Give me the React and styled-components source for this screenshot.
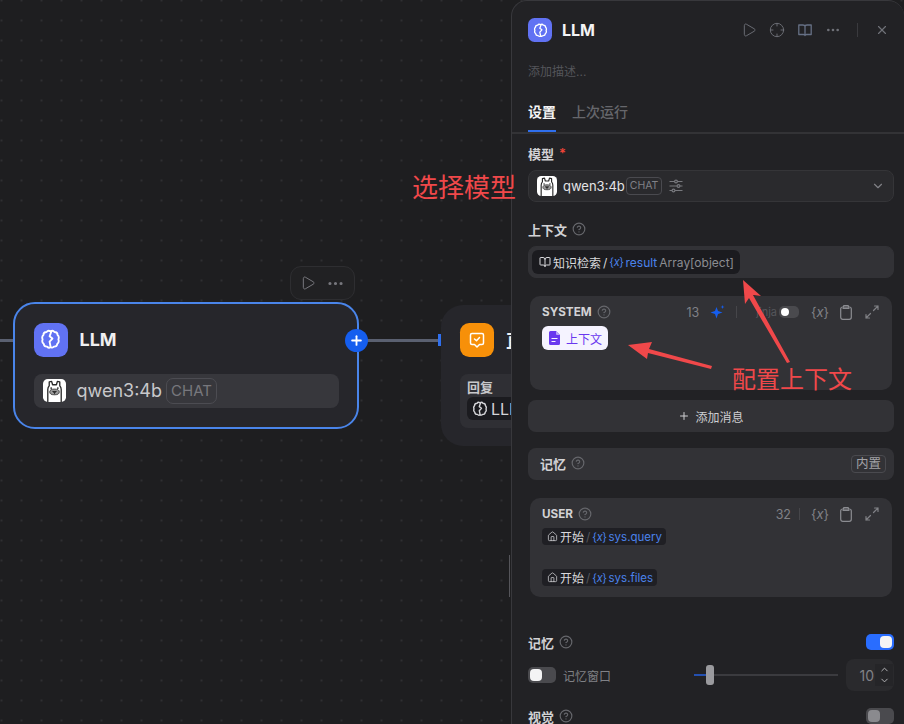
import styled, { createGlobalStyle } from "styled-components";
import { Play, Crosshair, Ellipsis, X, ChevronDown, ChevronUp, CircleHelp, Plus, House, BookOpen } from "lucide-react";

const GlobalStyle = createGlobalStyle`
  html, body { margin: 0; padding: 0; background: #1e1e20; }
  body { font-family: Inter, "Noto Sans CJK SC", sans-serif; overflow: hidden; }
`;

const Canvas = styled.div`
  position: relative;
  width: 904px;
  height: 724px;
  overflow: hidden;
  background-color: #1e1e20;
  background-image: radial-gradient(circle, #2f2f31 1px, transparent 1.4px);
  background-size: 20px 20px;
  background-position: 11.5px 10.5px;
`;

/* workflow nodes, free placement on the canvas */
const Node = styled.div`
  position: absolute;
  left: ${(p) => p.$x}px;
  top: ${(p) => p.$y}px;
  width: ${(p) => p.$w}px;
  height: ${(p) => p.$h}px;
  box-sizing: border-box;
  padding: ${(p) => (p.$selected ? "18.5px 18.5px" : "18px 0 18px 19px")};
  border-radius: ${(p) => (p.$selected ? "22px" : "22px 0 0 22px")};
  background: #26262b;
  border: ${(p) => (p.$selected ? "2.5px solid #4a85ea" : "none")};
  display: flex;
  flex-direction: column;
  gap: 17px;
  overflow: hidden;
`;

const NodeHead = styled.div`
  display: flex;
  align-items: center;
  gap: 12px;
  color: #f0f0f1;
  font-size: 18px;
  font-weight: 700;
  white-space: nowrap;
`;

const NodeTitle = styled.span`
  min-width: 0;
  overflow: hidden;
`;

const IconTile = styled.div`
  flex: none;
  width: ${(p) => p.$size}px;
  height: ${(p) => p.$size}px;
  border-radius: ${(p) => p.$size * 0.27}px;
  background: ${(p) => p.$bg};
  display: flex;
  align-items: center;
  justify-content: center;
`;

const NodeModel = styled.div`
  height: 34px;
  border-radius: 8px;
  background: #37373c;
  display: flex;
  align-items: center;
  padding-left: 9px;
  color: #c8c8cb;
  font-size: 18px;
  gap: 11px;
`;

const NodeBadge = styled.span`
  width: 51px;
  height: 26px;
  box-sizing: border-box;
  border: 1px solid #4c4c52;
  border-radius: 7px;
  color: #77777d;
  font-size: 15px;
  display: flex;
  align-items: center;
  justify-content: center;
  margin-left: -7px;
`;

const ReplyBox = styled.div`
  height: 55px;
  border-radius: 8px 0 0 8px;
  background: #2f2f34;
  padding: 3px 0 3px 7px;
  box-sizing: border-box;
  color: #c8c8cb;
  font-size: 13px;
  font-weight: 600;
  line-height: 20px;
  overflow: hidden;
`;

const ReplyChip = styled.div`
  display: flex;
  align-items: center;
  gap: 3px;
  height: 23px;
  padding-left: 5px;
  border-radius: 6px 0 0 6px;
  background: #1b1b1f;
  color: #d5d5d8;
  font-size: 16px;
  font-weight: 400;
  white-space: nowrap;
  overflow: hidden;

  svg {
    flex: none;
  }
`;

const NodeToolbar = styled.div`
  position: absolute;
  left: 290px;
  top: 266px;
  width: 65px;
  height: 34px;
  box-sizing: border-box;
  border: 1px solid #2e2e31;
  border-radius: 11px;
  background: #212123;
  display: flex;
  align-items: center;
  justify-content: center;
  gap: 10px;
  color: #77777d;
`;

const Wire = styled.div`
  position: absolute;
  top: 339px;
  left: ${(p) => p.$x}px;
  width: ${(p) => p.$w}px;
  height: 3px;
  background: #5a6070;
`;

const TargetPin = styled.div`
  position: absolute;
  left: 438px;
  top: 334px;
  width: 3px;
  height: 12px;
  background: #2f6fed;
`;

const AddHandle = styled.div`
  position: absolute;
  left: 345px;
  top: 329px;
  width: 23px;
  height: 23px;
  border-radius: 50%;
  background: #155eef;
  color: #fff;
  display: flex;
  align-items: center;
  justify-content: center;
`;

/* settings panel */
const Panel = styled.aside`
  position: absolute;
  left: 511px;
  top: 0;
  width: 393px;
  height: 724px;
  box-sizing: border-box;
  overflow: hidden;
  background: #222225;
  border: 1.5px solid #38383c;
  border-bottom: none;
  border-right: none;
  border-radius: 16px 16px 0 0;
`;

const PanelHead = styled.div`
  display: flex;
  align-items: center;
  height: 24px;
  margin-top: 17px;
  padding: 0 15px 0 16px;
`;

const PanelTitle = styled.div`
  margin-left: 10px;
  flex: 1;
  color: #f4f4f5;
  font-size: 16px;
  font-weight: 700;
`;

const HeadActions = styled.div`
  display: flex;
  align-items: center;
  gap: 12px;
  color: #6f7178;
`;

const HeadDivider = styled.span`
  width: 1px;
  height: 14px;
  margin: 0 5px 0 4px;
  background: #3a3a3e;
`;

const Description = styled.div`
  margin: 21px 0 0 16px;
  color: #54555a;
  font-size: 12px;
  line-height: 18px;
`;

const Tabs = styled.div`
  display: flex;
  gap: 16px;
  height: 32px;
  margin-top: 19px;
  padding: 0 16px;
  border-bottom: 2px solid #333336;
`;

const Tab = styled.div`
  height: 32px;
  box-sizing: border-box;
  font-size: 14px;
  font-weight: ${(p) => (p.$active ? 600 : 500)};
  line-height: 24px;
  color: ${(p) => (p.$active ? "#f4f4f5" : "#66676c")};
  border-bottom: 2px solid ${(p) => (p.$active ? "#2f6fed" : "transparent")};
`;

const Body = styled.div`
  padding: 10px 10px 0 16px;
`;

const Label = styled.div`
  display: flex;
  align-items: center;
  gap: 5px;
  height: 18px;
  color: #d2d2d5;
  font-size: 13px;
  font-weight: 600;
  margin-top: ${(p) => p.$mt || 0}px;
`;

const Required = styled.span`
  color: #f04438;
`;

const Help = styled(CircleHelp)`
  color: #66676c;
  flex: none;
`;

const Field = styled.div`
  height: 32px;
  margin-top: ${(p) => p.$mt || 0}px;
  box-sizing: border-box;
  border-radius: 8px;
  background: ${(p) => (p.$soft ? "#323236" : "#2a2a2d")};
  border: 1px solid ${(p) => (p.$soft ? "#323236" : "#353538")};
  display: flex;
  align-items: center;
`;

const ModelName = styled.span`
  margin-left: 6px;
  color: #e4e4e6;
  font-size: 13px;
`;

const Badge = styled.span`
  height: 18px;
  box-sizing: border-box;
  padding: 0 ${(p) => (p.$big ? 4 : 3)}px;
  margin-left: 1px;
  border: 1px solid #4a4a4f;
  border-radius: 4px;
  color: ${(p) => (p.$big ? "#a2a2a6" : "#808186")};
  font-size: ${(p) => (p.$big ? 12.5 : 10.5)}px;
  line-height: 16px;
`;

const Push = styled.span`
  flex: 1;
`;

const ContextChip = styled.div`
  display: flex;
  align-items: center;
  height: 24px;
  margin-left: 3px;
  padding: 0 6px 0 7px;
  gap: 2px;
  border-radius: 6px;
  background: #1b1b1f;
  color: #d9d9dc;
  font-size: 12px;
  white-space: nowrap;
`;

const VarText = styled.span`
  color: #4b83ec;
`;

const MutedText = styled.span`
  color: #8b8c91;
`;

const Slash = styled.span`
  color: ${(p) => p.$color || "#d9d9dc"};
`;

const VarMark = styled.span`
  color: #4b83ec;
  font-size: 11px;
  letter-spacing: -0.4px;
`;

const Prompt = styled.div`
  margin: ${(p) => p.$mt}px 2px 0;
  height: ${(p) => p.$h}px;
  box-sizing: border-box;
  padding: 8px 12px;
  border-radius: 10px;
  background: #323236;
`;

const PromptHead = styled.div`
  display: flex;
  align-items: center;
  height: 16px;
  color: #d2d2d5;
  font-size: 11.7px;
  font-weight: 700;
  gap: 5px;
`;

const PromptTools = styled.div`
  margin-left: auto;
  display: flex;
  align-items: center;
  color: #808186;
  font-size: 12.5px;
  font-weight: 400;
  padding-right: 1px;
`;

const ToolSlot = styled.span`
  flex: none;
  display: flex;
  align-items: center;
  justify-content: center;
  width: ${(p) => p.$w}px;
  margin-left: ${(p) => p.$ml || 0}px;
  color: ${(p) => p.$color || "inherit"};
  font-size: 13px;
`;

const ToolDivider = styled.span`
  width: 1px;
  height: 12px;
  background: #46464a;
  margin: 0 ${(p) => p.$r}px 0 ${(p) => p.$l}px;
`;

const Jinja = styled.span`
  color: #55565b;
  font-size: 11px;
  margin-right: 2px;
`;

const ContextTag = styled.div`
  display: inline-flex;
  align-items: center;
  gap: 5px;
  height: 24px;
  margin-top: 6px;
  padding: 0 6px;
  border-radius: 6px;
  background: #f5f3ff;
  color: #6938ef;
  font-size: 12px;
`;

const VarChip = styled.div`
  display: flex;
  align-items: center;
  width: fit-content;
  height: 17px;
  margin-top: ${(p) => p.$mt}px;
  padding: 0 4px 0 5px;
  gap: 2px;
  border-radius: 4px;
  background: #1f1f24;
  color: #d9d9dc;
  font-size: 12px;
`;

const VarName = styled(VarText)`
  font-size: 11.5px;
`;

const AddMessage = styled.div`
  height: 32px;
  margin-top: 10px;
  border-radius: 8px;
  background: #323236;
  display: flex;
  align-items: center;
  justify-content: center;
  gap: 5px;
  color: #cfcfd2;
  font-size: 12px;
`;

const MemoryBar = styled.div`
  height: 32px;
  margin-top: 16px;
  padding: 0 8px 0 12px;
  border-radius: 8px;
  background: #323236;
  display: flex;
  align-items: center;
  justify-content: space-between;
`;

const MemoryLabel = styled(Label)`
  padding-bottom: 2px;
`;

const SwitchRow = styled.div`
  display: flex;
  align-items: center;
  justify-content: space-between;
  height: 18px;
  margin-top: ${(p) => p.$mt}px;
`;

const Switch = styled.span`
  flex: none;
  box-sizing: border-box;
  width: ${(p) => p.$w || 28}px;
  height: ${(p) => p.$h || 16}px;
  padding: 2px;
  border-radius: 5px;
  display: flex;
  background: ${(p) => (p.$on ? "#296dff" : "#4a4a4e")};
  justify-content: ${(p) => (p.$on ? "flex-end" : "flex-start")};
  &::after {
    content: "";
    width: ${(p) => (p.$h || 16) - 4}px;
    height: ${(p) => (p.$h || 16) - 4}px;
    border-radius: 4px;
    background: ${(p) => p.$knob || "#f4f4f5"};
  }
`;

const WindowRow = styled.div`
  display: flex;
  align-items: center;
  height: 32px;
  margin-top: 8px;
  color: #808186;
  font-size: 12px;
`;

const WindowLabel = styled.span`
  margin-left: 7px;
  width: 131px;
`;

const Slider = styled.div`
  position: relative;
  width: 144px;
  height: 2px;
  background: #3b3b3f;
`;

const SliderFill = styled.div`
  height: 2px;
  width: 12px;
  background: #2450b0;
`;

const SliderThumb = styled.div`
  position: absolute;
  left: 12px;
  top: -9px;
  width: 8px;
  height: 20px;
  border-radius: 3px;
  background: #9a9a9e;
`;

const Stepper = styled.div`
  width: 48px;
  height: 32px;
  margin-left: auto;
  box-sizing: border-box;
  border-radius: 8px;
  background: #2a2a2d;
  display: flex;
  align-items: center;
  justify-content: flex-end;
  padding-right: 1px;
  gap: 1px;
  color: #808186;
  font-size: 14px;
`;

const StepperArrows = styled.span`
  display: flex;
  flex-direction: column;
  width: 18px;
  align-items: center;
  background: #252528;
  color: #bdbdc1;
`;

const ResizeGrip = styled.div`
  position: absolute;
  left: 509px;
  top: 555px;
  width: 1px;
  height: 42px;
  background: #55555a;
`;

/* red annotations drawn over the screenshot */
const Note = styled.div`
  position: absolute;
  left: ${(p) => p.$x}px;
  top: ${(p) => p.$y}px;
  color: #f0484a;
  font-size: ${(p) => p.$size}px;
  line-height: 30px;
  white-space: nowrap;
`;

const ArrowLayer = styled.svg`
  position: absolute;
  left: 0;
  top: 0;
  pointer-events: none;
`;

function BrainIcon({ size = 16, color = "#fff" }) {
  return (
    <svg width={size} height={size} viewBox="0 0 16 16" fill="none" stroke={color} strokeWidth="1.4" strokeLinecap="round" strokeLinejoin="round">
      <path d="M8 1.8c1-.6 2.400-.4 3 .5 1.300 0 2.400 1 2.400 2.300.8.7 1.100 2.200.6 3.400.5 1.200.1 2.600-.8 3.300-.2 1.300-1.300 2.200-2.600 2.100-.7.8-2 1-2.600.4-.7.6-1.900.4-2.600-.4-1.300.1-2.400-.8-2.600-2.100-.9-.7-1.300-2.100-.8-3.300-.5-1.200-.2-2.700.6-3.400 0-1.300 1.100-2.300 2.400-2.300.6-.9 2-1.100 3-.5Z" />
      <path d="M8.600 2 7.300 5.600l2.200 1.700-2.200 2.400.8 4" />
    </svg>
  );
}

function AnswerIcon() {
  return (
    <svg width="20" height="20" viewBox="0 0 20 20" fill="none" stroke="#fff" strokeWidth="1.5" strokeLinecap="round" strokeLinejoin="round">
      <path d="M5 3.5h10a1.5 1.5 0 0 1 1.5 1.5v8a1.5 1.5 0 0 1-1.5 1.5h-2.5L10 17l-2.5-2.5H5A1.5 1.5 0 0 1 3.5 13V5A1.5 1.5 0 0 1 5 3.5Z" />
      <path d="m7.5 9 2 1.8 3-3.2" />
    </svg>
  );
}

function LlamaAvatar({ size }) {
  return (
    <svg width={size} height={size} viewBox="0 0 24 24">
      <rect width="24" height="24" rx="5" fill="#fff" />
      <path d="M5 24V11c0-2 .7-3.200 1.500-4V3l2.500-.5L10 6h4l1-3.500 2.500.5v4c.8.800 1.500 2 1.500 4v13" fill="#fff" stroke="#2a2a2a" strokeWidth="1.400" strokeLinejoin="round" />
      <ellipse cx="12" cy="13.500" rx="5" ry="3" fill="#9a9a9a" stroke="#2a2a2a" strokeWidth=".8" />
      <path d="M10 13h4l-2 1.500ZM12 14.500V16" stroke="#222" strokeWidth=".8" fill="#222" />
      <circle cx="8.500" cy="9.500" r=".9" fill="#222" />
      <circle cx="15.500" cy="9.500" r=".9" fill="#222" />
    </svg>
  );
}

function ParamsIcon() {
  return (
    <svg width="16" height="16" viewBox="0 0 16 16" fill="none" stroke="#77787d" strokeWidth="1.200">
      <path d="M1.500 3.500h5M9.500 3.500h5M1.500 8h7.500M12 8h2.500M1.500 12.500h2.500M7 12.500h7.500" />
      <circle cx="8" cy="3.500" r="1.400" />
      <circle cx="10.500" cy="8" r="1.400" />
      <circle cx="5.500" cy="12.500" r="1.400" />
    </svg>
  );
}

function BookColumns() {
  return (
    <svg width="16" height="16" viewBox="0 0 16 16" fill="none" stroke="#667085" strokeWidth="1.300" strokeLinejoin="round">
      <path d="M8 4.500v9M8 4.500C8 3.500 7 3 6 3H1.800v9.500h4.700c.8 0 1.500.4 1.500 1 0-.6.7-1 1.500-1h4.700V3H10c-1 0-2 .5-2 1.500Z" />
    </svg>
  );
}

function Sparkle() {
  return (
    <svg width="15" height="15" viewBox="0 0 15 15" fill="#155eef">
      <path d="M6.500 2 8 6l4.500 1.500L8 9l-1.500 4.500L5 9 .5 7.500 5 6Z" />
      <path d="m12.500 0 .5 1.500 1.500.5-1.500.5-.5 1.500-.5-1.500-1.500-.5 1.500-.5Z" />
    </svg>
  );
}

function ClipboardIcon() {
  return (
    <svg width="12" height="15" viewBox="0 0 12 15" fill="none" stroke="#8b8c91" strokeWidth="1.200" strokeLinecap="round" strokeLinejoin="round">
      <rect x=".7" y="2" width="10.600" height="12.300" rx="2" />
      <path d="M3.500 2v-.5a1 1 0 0 1 1-1h3a1 1 0 0 1 1 1V2M3 3.300h6" />
    </svg>
  );
}

function ExpandIcon() {
  return (
    <svg width="14" height="14" viewBox="0 0 14 14" fill="none" stroke="#808186" strokeWidth="1.200" strokeLinecap="round" strokeLinejoin="round">
      <path d="M8.500 5.500 13 1M9.500 1H13v3.500M5.500 8.500 1 13M1 9.500V13h3.500" />
    </svg>
  );
}

function DocIcon() {
  return (
    <svg width="13" height="14" viewBox="0 0 13 14">
      <path d="M2.500 0H8l4 4v8.500A1.500 1.500 0 0 1 10.500 14h-8A1.500 1.500 0 0 1 1 12.500v-11A1.500 1.500 0 0 1 2.500 0Z" fill="#6938ef" />
      <path d="M8 0v3a1 1 0 0 0 1 1h3" fill="#b9a6f8" />
      <path d="M3.500 7.500h6M3.500 10.500h4" stroke="#f5f3ff" strokeWidth="1.200" />
    </svg>
  );
}

const XBraces = () => <>{"{"}<i>x</i>{"}"}</>;

function VarRef({ name, mt }) {
  return (
    <VarChip $mt={mt}>
      <House size={11} strokeWidth={1.6} />
      开始
      <Slash $color="#55565b">/</Slash>
      <VarMark><XBraces /></VarMark>
      <VarName>{name}</VarName>
    </VarChip>
  );
}

function PromptActions() {
  return (
    <>
      <ToolSlot $w={16}><XBraces /></ToolSlot>
      <ToolSlot $w={12} $ml={12}><ClipboardIcon /></ToolSlot>
      <ToolSlot $w={14} $ml={13}><ExpandIcon /></ToolSlot>
    </>
  );
}

function App() {
  return (
    <Canvas>
      <GlobalStyle />

      <Wire $x={0} $w={14} />
      <Wire $x={366} $w={74} />
      <NodeToolbar>
        <Play size={16} strokeWidth={1.5} />
        <Ellipsis size={19} />
      </NodeToolbar>

      <Node $x={13} $y={302} $w={346} $h={127} $selected>
        <NodeHead>
          <IconTile $size={34} $bg="#6172f3"><BrainIcon size={21} /></IconTile>
          LLM
        </NodeHead>
        <NodeModel>
          <LlamaAvatar size={23} />
          qwen3:4b
          <NodeBadge>CHAT</NodeBadge>
        </NodeModel>
      </Node>
      <AddHandle><Plus size={15} strokeWidth={3} /></AddHandle>

      <Node $x={441} $y={305} $w={71} $h={141}>
        <NodeHead>
          <IconTile $size={34} $bg="#f79009"><AnswerIcon /></IconTile>
          <NodeTitle>直接回复</NodeTitle>
        </NodeHead>
        <ReplyBox>
          回复
          <ReplyChip><BrainIcon size={16} color="#d5d5d8" />LLM</ReplyChip>
        </ReplyBox>
      </Node>
      <TargetPin />

      <Panel>
        <PanelHead>
          <IconTile $size={24} $bg="#6172f3"><BrainIcon size={15} /></IconTile>
          <PanelTitle>LLM</PanelTitle>
          <HeadActions>
            <Play size={16} strokeWidth={1.4} />
            <Crosshair size={16} strokeWidth={1.4} />
            <BookColumns />
            <Ellipsis size={16} />
            <HeadDivider />
            <X size={14} />
          </HeadActions>
        </PanelHead>
        <Description>添加描述...</Description>
        <Tabs>
          <Tab $active>设置</Tab>
          <Tab>上次运行</Tab>
        </Tabs>
        <Body>
          <Label>模型 <Required>*</Required></Label>
          <Field $mt={8}>
            <span style={{ width: 8 }} />
            <LlamaAvatar size={20} />
            <ModelName>qwen3:4b</ModelName>
            <Badge>CHAT</Badge>
            <span style={{ width: 6 }} />
            <ParamsIcon />
            <Push />
            <ChevronDown size={14} color="#808186" style={{ marginRight: 8 }} />
          </Field>

          <Label $mt={18}>上下文 <Help size={14} /></Label>
          <Field $mt={8} $soft>
            <ContextChip>
              <BookOpen size={12} />
              知识检索 <Slash>/</Slash>
              <VarMark><XBraces /></VarMark>
              <VarText>result</VarText>
              <MutedText>Array[object]</MutedText>
            </ContextChip>
          </Field>

          <Prompt $mt={18} $h={94}>
            <PromptHead>
              SYSTEM <Help size={14} />
              <PromptTools>
                13
                <ToolSlot $w={15} $ml={11} $color="#155eef"><Sparkle /></ToolSlot>
                <ToolDivider $l={11} $r={19} />
                <Jinja>jinja</Jinja>
                <Switch $w={20} $h={12} $knob="#fff" />
                <span style={{ width: 13 }} />
                <PromptActions />
              </PromptTools>
            </PromptHead>
            <ContextTag><DocIcon />上下文</ContextTag>
          </Prompt>

          <AddMessage><Plus size={12} />添加消息</AddMessage>

          <MemoryBar>
            <MemoryLabel>记忆 <Help size={14} /></MemoryLabel>
            <Badge $big>内置</Badge>
          </MemoryBar>

          <Prompt $mt={18} $h={99}>
            <PromptHead>
              USER <Help size={14} />
              <PromptTools>
                32
                <ToolDivider $l={8} $r={12} />
                <PromptActions />
              </PromptTools>
            </PromptHead>
            <VarRef name="sys.query" mt={6} />
            <VarRef name="sys.files" mt={24} />
          </Prompt>

          <SwitchRow $mt={36}>
            <Label>记忆 <Help size={14} /></Label>
            <Switch $on $knob="#f4f4f5" />
          </SwitchRow>
          <WindowRow>
            <Switch />
            <WindowLabel>记忆窗口</WindowLabel>
            <Slider>
              <SliderFill />
              <SliderThumb />
            </Slider>
            <Stepper>
              10
              <StepperArrows>
                <ChevronUp size={11} />
                <ChevronDown size={11} />
              </StepperArrows>
            </Stepper>
          </WindowRow>
          <SwitchRow $mt={16}>
            <Label>视觉 <Help size={14} /></Label>
            <Switch $knob="#8a8a8e" />
          </SwitchRow>
        </Body>
      </Panel>

      <ResizeGrip />

      <Note $x={412} $y={173} $size={26}>选择模型</Note>
      <Note $x={732} $y={365} $size={24}>配置上下文</Note>
      <ArrowLayer width="904" height="724" viewBox="0 0 904 724">
        <polygon fill="#f0484a" points="743,280 761,296 753,295 790,362 787,363 749,298 745,304" />
        <polygon fill="#f0484a" points="628,345 652,342 649,349 712,366 711,369 648,353 647,359" />
      </ArrowLayer>
    </Canvas>
  );
}

export default App;
